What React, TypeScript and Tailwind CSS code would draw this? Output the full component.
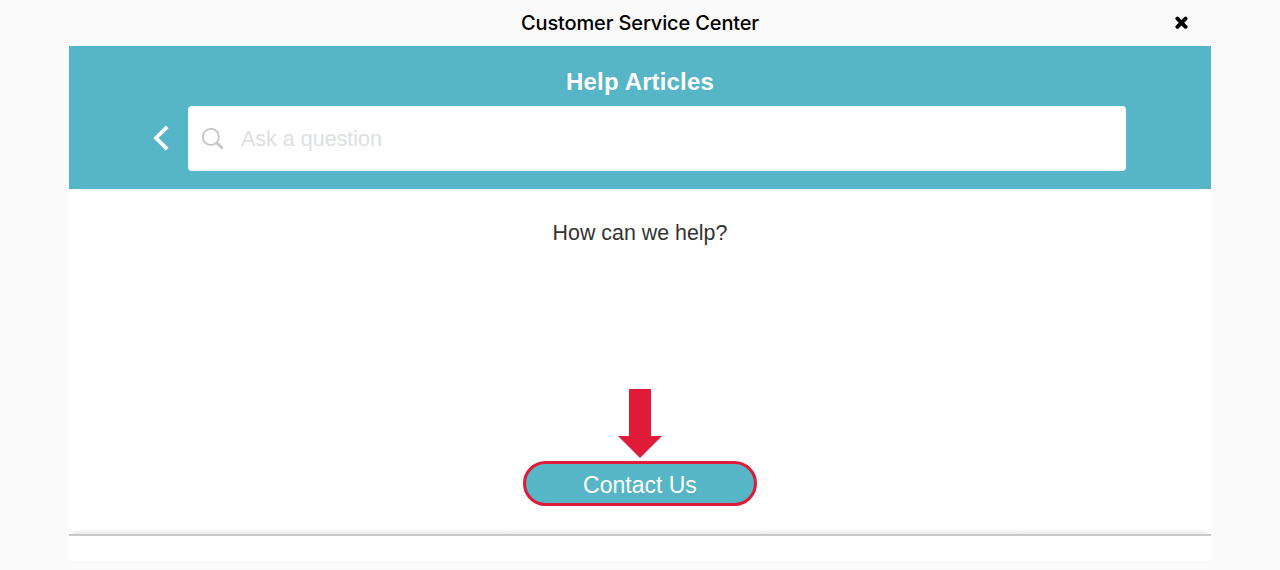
import { useState } from 'react';

interface IconProps {
  className?: string;
}

function IconClose({ className }: IconProps) {
  return (
    <svg viewBox="0 0 13 13" fill="none" className={className}>
      <path d="M2.4 2.6 10.6 10.8M10.6 2.6 2.4 10.8" stroke="currentColor" strokeWidth="3.9" strokeLinecap="round" />
    </svg>
  );
}

function IconBack({ className }: IconProps) {
  return (
    <svg viewBox="0 0 16 26" fill="none" className={className}>
      <path d="M14.2 1.8 3 13 14.2 24.2" stroke="currentColor" strokeWidth="3.8" />
    </svg>
  );
}

function IconSearch({ className }: IconProps) {
  return (
    <svg viewBox="0 0 22 22" fill="none" className={className}>
      <circle cx="8.9" cy="8.9" r="8" stroke="currentColor" strokeWidth="1.9" />
      <path d="M14.3 14.4 20.6 20.4" stroke="currentColor" strokeWidth="2.8" />
    </svg>
  );
}

function ArrowDown({ className }: IconProps) {
  return (
    <svg viewBox="0 0 44 69" fill="currentColor" className={className}>
      <path d="M11 0H33V47H44L22 69 0 47H11Z" />
    </svg>
  );
}

export default function App() {
  const [question, setQuestion] = useState('');

  return (
    <div className="flex h-[570px] w-full flex-col bg-[#fafafa] font-['Liberation_Sans',sans-serif]">
      <header className="grid h-[46px] shrink-0 grid-cols-[1fr_auto_1fr] items-center">
        <h1 className="col-start-2 font-['Inter',sans-serif] text-[20px] leading-[46px] font-medium tracking-[-0.14px] text-black">
          Customer Service Center
        </h1>
        <button type="button" aria-label="Close" className="mr-[92px] mb-px justify-self-end text-black">
          <IconClose className="h-[13px] w-[13px]" />
        </button>
      </header>

      <main className="mx-[69px] flex h-[515px] flex-col bg-white">
        <section className="h-[143px] shrink-0 bg-[#56b5c6] pt-[18px]">
          <h2 className="text-center text-[24px] leading-[36px] font-bold tracking-[0.15px] text-white">Help Articles</h2>
          <div className="mt-[6px] flex items-center pr-[85px] pl-[84px]">
            <button type="button" aria-label="Back" className="mr-[19px] mb-[2px] text-white">
              <IconBack className="h-[26px] w-[16px]" />
            </button>
            <label className="flex h-[65px] flex-1 items-center rounded-[4px] bg-white pl-[14px]">
              <IconSearch className="h-[22px] w-[22px] shrink-0 text-[#c5c6ca]" />
              <input
                type="text"
                value={question}
                onChange={(e) => setQuestion(e.target.value)}
                placeholder="Ask a question"
                className="ml-[17px] h-full flex-1 pt-[2px] text-[21.5px] text-gray-800 outline-none placeholder:text-[#dddfe2]"
              />
            </label>
          </div>
        </section>

        <section className="flex h-[345px] shrink-0 flex-col items-center pt-[29px]">
          <p className="text-[21.4px] leading-[30px] text-[#333333]">How can we help?</p>
          <ArrowDown className="mt-[141px] h-[69px] w-[44px] text-[#e01b37]" />
          <button
            type="button"
            className="mt-[3px] flex h-[45px] w-[234px] items-center justify-center rounded-full border-[3px] border-[#e01b37] bg-[#56b5c6] pt-[3px] text-[23px] leading-none text-white"
          >
            Contact Us
          </button>
          <div className="mt-auto w-full px-[3px]">
            <div className="h-[5px] rounded-t-full bg-linear-to-b from-white to-[#ebebeb]" />
          </div>
        </section>
        <div className="h-[2px] shrink-0 bg-[#c9c9c9]" />
      </main>
    </div>
  );
}
